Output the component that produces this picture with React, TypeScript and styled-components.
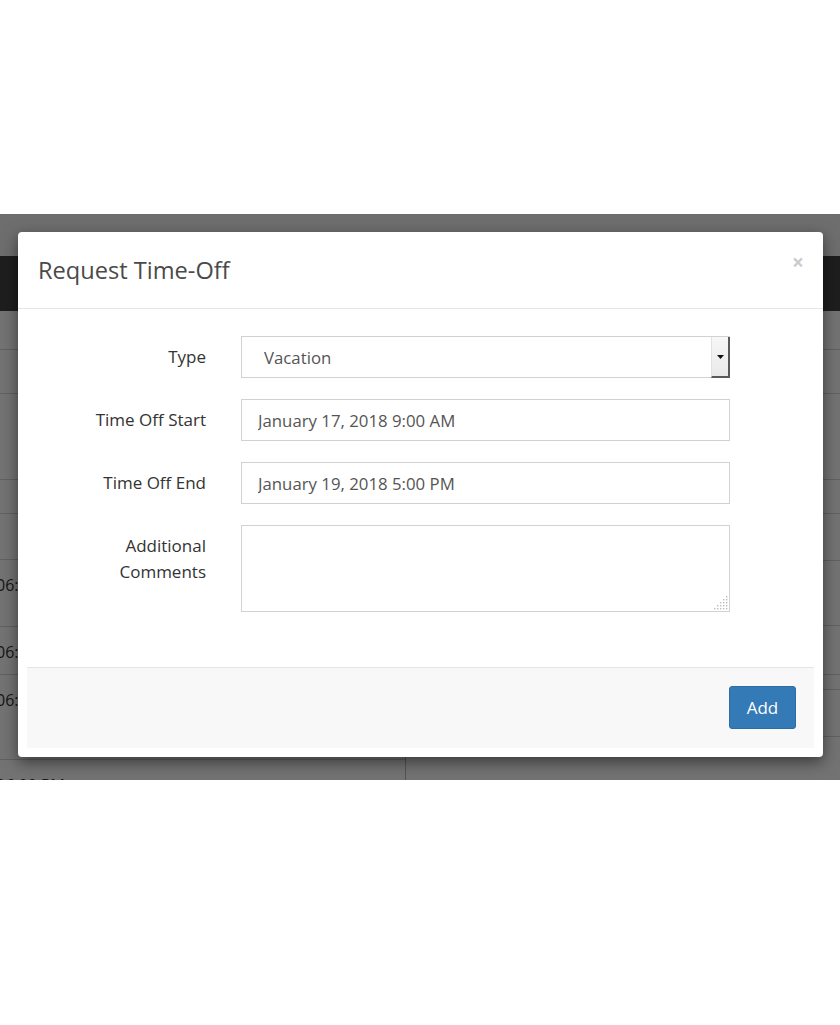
import React from "react"
import styled, { createGlobalStyle } from "styled-components"

const GlobalStyle = createGlobalStyle`
  html, body {
    margin: 0;
    padding: 0;
    background: #ffffff;
  }
  body {
    font-family: "Open Sans", "Liberation Sans", Arial, sans-serif;
  }
  * {
    box-sizing: border-box;
  }
`

interface Row {
  height: number
  text?: string
}

const leftRows: Row[] = [
  { height: 39 },
  { height: 44 },
  { height: 86 },
  { height: 34 },
  { height: 46 },
  { height: 67, text: "06:00 PM" },
  { height: 48, text: "06:00 PM" },
  { height: 85, text: "06:00 PM" },
  { height: 60, text: "06:00 PM" },
]

const rightRows: Row[] = [
  { height: 39 },
  { height: 44 },
  { height: 86 },
  { height: 34 },
  { height: 47 },
  { height: 65 },
  { height: 49 },
  { height: 12 },
  { height: 47 },
  { height: 60 },
]

const App = () => {
  return (
    <Page>
      <GlobalStyle />
      <Stage>
        <BehindApp>
          <TopStrip />
          <NavBar />
          <Table>
            <Column>
              {leftRows.map((row, i) => (
                <Cell key={i} $height={row.height}>
                  {row.text && <CellText>{row.text}</CellText>}
                </Cell>
              ))}
            </Column>
            <Column $divider>
              {rightRows.map((row, i) => (
                <Cell key={i} $height={row.height} />
              ))}
            </Column>
          </Table>
        </BehindApp>

        <Backdrop />

        <Modal>
          <ModalHeader>
            <ModalTitle>Request Time-Off</ModalTitle>
            <CloseButton type="button">×</CloseButton>
          </ModalHeader>

          <ModalBody>
            <FormRow>
              <Label>Type</Label>
              <SelectWrap>
                <Select defaultValue="vacation">
                  <option value="vacation">Vacation</option>
                  <option value="sick">Sick</option>
                  <option value="personal">Personal</option>
                </Select>
                <ArrowBox>
                  <svg width="7" height="4" viewBox="0 0 7 4">
                    <path d="M0 0 H7 L3.5 4 Z" fill="#111" />
                  </svg>
                </ArrowBox>
              </SelectWrap>
            </FormRow>

            <FormRow>
              <Label>Time Off Start</Label>
              <TextInput type="text" defaultValue="January 17, 2018 9:00 AM" />
            </FormRow>

            <FormRow>
              <Label>Time Off End</Label>
              <TextInput type="text" defaultValue="January 19, 2018 5:00 PM" />
            </FormRow>

            <FormRow>
              <Label>
                Additional
                <br />
                Comments
              </Label>
              <TextAreaWrap>
                <TextArea />
                <Grip width="14" height="14" viewBox="0 0 14 14">
                  {[
                    [12, 0], [12, 3], [9, 3], [12, 6], [9, 6], [6, 6],
                    [12, 9], [9, 9], [6, 9], [3, 9],
                    [12, 12], [9, 12], [6, 12], [3, 12], [0, 12],
                  ].map(([x, y], i) => (
                    <rect key={i} x={x} y={y} width="1.4" height="1.4" fill="#bdbdbd" />
                  ))}
                </Grip>
              </TextAreaWrap>
            </FormRow>
          </ModalBody>

          <ModalFooter>
            <PrimaryButton type="button">Add</PrimaryButton>
          </ModalFooter>
        </Modal>
      </Stage>
    </Page>
  )
}

export default App

const Page = styled.div`
  padding-top: 214px;
  min-height: 1025px;
  background: #ffffff;
`

const Stage = styled.div`
  position: relative;
  height: 566px;
  overflow: hidden;
`

const BehindApp = styled.div`
  display: flex;
  flex-direction: column;
  background: #ffffff;
  color: #333;
  font-size: 16px;
`

const TopStrip = styled.div`
  height: 42px;
  background: #f4f4f4;
`

const NavBar = styled.div`
  height: 55px;
  background: #444444;
`

const Table = styled.div`
  display: grid;
  grid-template-columns: 405px 1fr;
`

const Column = styled.div<{ $divider?: boolean }>`
  display: flex;
  flex-direction: column;
  border-left: ${(p) => (p.$divider ? "1px solid #bbbbbb" : "none")};
`

const Cell = styled.div<{ $height: number }>`
  height: ${(p) => p.$height}px;
  flex-shrink: 0;
  border-bottom: 1px solid #d4d4d4;
  padding-top: 14px;
  line-height: 22px;
`

const CellText = styled.span`
  display: block;
  margin-left: -4px;
  white-space: nowrap;
`

const Backdrop = styled.div`
  position: absolute;
  inset: 0;
  background: rgba(0, 0, 0, 0.55);
`

const Modal = styled.div`
  position: absolute;
  top: 18px;
  left: 18px;
  width: 805px;
  background: #ffffff;
  border-radius: 4px;
  box-shadow: 0 5px 15px rgba(0, 0, 0, 0.5);
  display: flex;
  flex-direction: column;
  padding-bottom: 9px;
`

const ModalHeader = styled.div`
  display: flex;
  justify-content: space-between;
  align-items: flex-start;
  padding: 20px 20px;
  border-bottom: 1px solid #e5e5e5;
`

const ModalTitle = styled.h4`
  margin: 0;
  font-size: 23.6px;
  line-height: 36px;
  font-weight: 400;
  color: #4a4a4a;
`

const CloseButton = styled.button`
  border: 0;
  background: transparent;
  padding: 0;
  margin-right: -1px;
  font-family: "Open Sans", "Liberation Sans", Arial, sans-serif;
  font-size: 21px;
  font-weight: 700;
  line-height: 21px;
  color: #000;
  opacity: 0.2;
  cursor: pointer;
`

const ModalBody = styled.div`
  display: flex;
  flex-direction: column;
  gap: 21px;
  padding: 27px 0 55px;
`

const FormRow = styled.div`
  display: grid;
  grid-template-columns: 188px 489px;
  column-gap: 35px;
  align-items: start;
`

const Label = styled.label`
  text-align: right;
  padding-top: 8px;
  font-size: 17px;
  line-height: 26px;
  font-weight: 400;
  color: #333;
`

const fieldBase = `
  width: 100%;
  border: 1px solid #d2d2d2;
  border-radius: 0;
  background: #ffffff;
  font-family: "Open Sans", "Liberation Sans", Arial, sans-serif;
  font-size: 16.8px;
  color: #555;
  outline: none;
`

const SelectWrap = styled.div`
  position: relative;
  height: 42px;
`

const Select = styled.select`
  ${fieldBase}
  height: 42px;
  padding: 0 30px 0 22px;
  appearance: none;
  -webkit-appearance: none;
`

const ArrowBox = styled.span`
  position: absolute;
  top: 1px;
  right: 0;
  bottom: 0;
  width: 19px;
  display: flex;
  align-items: center;
  justify-content: center;
  background: linear-gradient(#f7f7f7, #e9e9e9);
  border-left: 1px solid #e2e2e2;
  border-right: 2px solid #5a5a5a;
  border-bottom: 2px solid #5a5a5a;
  pointer-events: none;
`

const TextInput = styled.input`
  ${fieldBase}
  height: 42px;
  padding: 0 16px;
`

const TextAreaWrap = styled.div`
  position: relative;
  height: 87px;
`

const TextArea = styled.textarea`
  ${fieldBase}
  display: block;
  height: 87px;
  padding: 8px 16px;
  resize: none;
`

const Grip = styled.svg`
  position: absolute;
  right: 2px;
  bottom: 2px;
`

const ModalFooter = styled.div`
  display: flex;
  justify-content: flex-end;
  margin: 0 9px;
  padding: 18px 18px 19px;
  background: #f8f8f8;
  border-top: 1px solid #e5e5e5;
`

const PrimaryButton = styled.button`
  height: 43px;
  min-width: 67px;
  padding: 0 16px;
  border: 1px solid #2e6da4;
  border-radius: 3px;
  background: #337ab7;
  color: #ffffff;
  font-family: "Open Sans", "Liberation Sans", Arial, sans-serif;
  font-size: 17px;
  cursor: pointer;
`
